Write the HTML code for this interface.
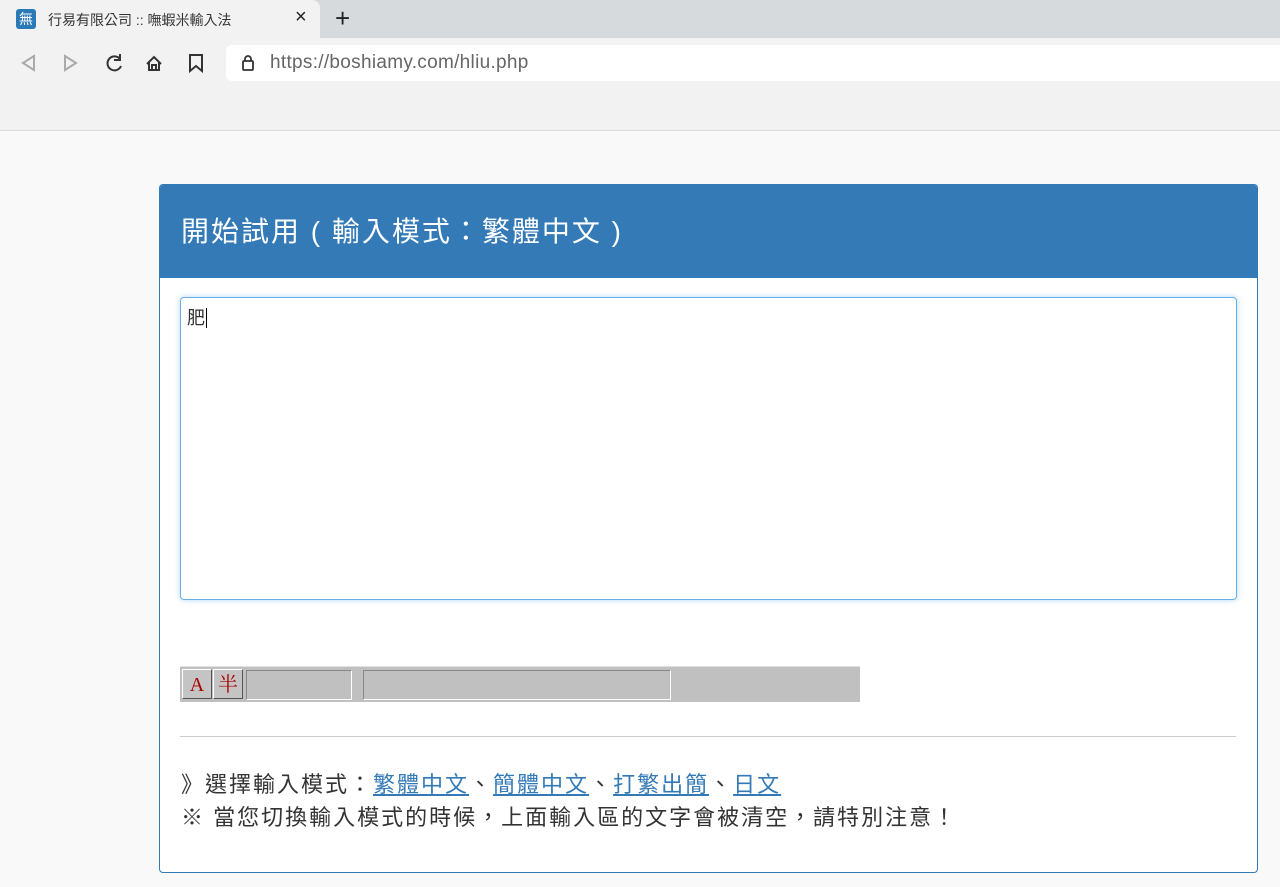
<!DOCTYPE html>
<html><head><meta charset="utf-8"><style>
body{margin:0;width:1280px;height:887px;overflow:hidden;background:#f9f9f9;font-family:"Liberation Sans","Noto Sans CJK TC",sans-serif;position:relative}
.tabbar{position:absolute;left:0;top:0;width:1280px;height:38px;background:#d7dadd}
.tab{position:absolute;left:0;top:0;width:320px;height:38px;background:#f2f2f2;border-radius:0 8px 0 0}
.tb{position:absolute;left:0;top:38px;width:1280px;height:92px;background:#f2f2f2;border-bottom:1px solid #dcdcdc}
.url{position:absolute;left:226px;top:45px;width:1060px;height:36px;background:#fff;border-radius:6px}
.panel{position:absolute;left:159px;top:184px;width:1097px;height:687px;border:1px solid #337ab7;border-radius:4px;background:#fff;overflow:hidden}
.hd{height:93px;background:#337ab7;color:#fff;font-size:28px;line-height:93px;padding-left:21px;letter-spacing:2px}
.ta{position:absolute;left:20px;top:112px;width:1057px;height:303px;box-sizing:border-box;border:1px solid #66afe9;border-radius:4px;box-shadow:0 0 6px rgba(102,175,233,.5);font-size:18px;color:#333;padding:6px}
.bar{position:absolute;left:20px;top:481px;width:680px;height:35px;background:#c0c0c0;border-top:1px solid #e0e0e0}
.btn{position:absolute;top:2px;width:30px;height:30px;background:#c4c4c4;border:1px solid;border-color:#fff #555 #555 #fff;color:#a00;font-size:20px;text-align:center;line-height:30px;box-sizing:border-box;font-family:"Liberation Serif","Noto Serif CJK SC",serif}
.box{position:absolute;top:3px;height:30px;border:1px solid;border-color:#888 #fff #fff #888;box-sizing:border-box}
hr{position:absolute;left:20px;top:551px;width:1056px;margin:0;border:0;border-top:1px solid #ccc}
.tx{position:absolute;left:21px;top:583px;font-size:22px;color:#333;line-height:33px;letter-spacing:2px}
a{color:#337ab7;text-decoration:underline}
</style></head><body>
<div class="tabbar"><div class="tab"></div></div>
<div style="position:absolute;left:16px;top:9px;width:20px;height:20px;background:#2a7ab8;border-radius:3px;color:#fff;font-size:14px;text-align:center;line-height:20px;font-family:'Noto Sans CJK TC',sans-serif">無</div>
<div style="position:absolute;left:48px;top:10px;font-size:14px;color:#333;font-family:'Liberation Sans','Noto Sans CJK TC',sans-serif">行易有限公司 :: 嘸蝦米輸入法</div>
<div style="position:absolute;left:295px;top:6px;font-size:20px;color:#222">×</div>
<div style="position:absolute;left:335px;top:3px;font-size:26px;color:#222">+</div>
<div class="tb"></div>
<svg style="position:absolute;left:0;top:45px" width="220" height="36" fill="none" stroke-width="2">
<path d="M34 11 L23 18 L34 25Z" stroke="#aaa"/>
<path d="M65 11 L76 18 L65 25Z" stroke="#aaa"/>
<path d="M120 14 A7 7 0 1 0 121 21 M120 9 V15 H114" stroke="#333"/>
<path d="M147 19 L154 12 L161 19 M149 17 V25 H159 V17 M152 25 V20 H156 V25" stroke="#333"/>
<path d="M190 10 H202 V26 L196 21 L190 26Z" stroke="#333"/>
</svg>
<div class="url"></div>
<svg style="position:absolute;left:240px;top:54px" width="16" height="18" fill="none" stroke="#333" stroke-width="1.8"><rect x="3" y="7" width="10" height="9" rx="1"/><path d="M5 7V5a3 3 0 0 1 6 0v2"/></svg>
<div style="position:absolute;left:270px;top:52px;font-size:19px;color:#666;letter-spacing:0.3px">https://boshiamy.com/hliu.php</div>
<div class="panel">
<div class="hd">開始試用 ( 輸入模式：繁體中文 )</div>
<div class="ta">肥<span style="border-left:1px solid #000;margin-left:1px"></span></div>
<div class="bar">
<div class="btn" style="left:2px">A</div>
<div class="btn" style="left:33px">半</div>
<div class="box" style="left:66px;width:106px"></div>
<div class="box" style="left:183px;width:308px"></div>
</div>
<hr>
<div class="tx">》選擇輸入模式：<a>繁體中文</a>、<a>簡體中文</a>、<a>打繁出簡</a>、<a>日文</a><br>※ 當您切換輸入模式的時候，上面輸入區的文字會被清空，請特別注意！</div>
</div>
</body></html>
